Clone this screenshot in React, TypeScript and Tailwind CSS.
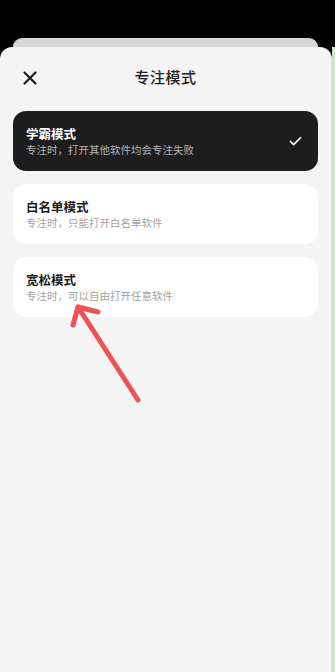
import { X, Check } from "lucide-react";

const modes = [
  { title: "学霸模式", desc: "专注时，打开其他软件均会专注失败", active: true },
  { title: "白名单模式", desc: "专注时，只能打开白名单软件", active: false },
  { title: "宽松模式", desc: "专注时，可以自由打开任意软件", active: false },
];

export default function App() {
  return (
    <div
      className="relative w-[335px] h-[672px] bg-black flex flex-col overflow-hidden"
      style={{ fontFamily: '"Noto Sans CJK SC", "Noto Sans", sans-serif' }}
    >
      <div className="h-[38px] shrink-0" />
      <div className="h-[9px] shrink-0 ml-[13px] mr-[17px] bg-[#d7d7d7] rounded-t-[10px]" />
      <div className="flex flex-1">
        <div className="w-[332px] bg-[#f4f4f4] rounded-t-[12px] border-r border-[#e2e2e2] flex flex-col">
          <div className="h-[60px] shrink-0 relative flex items-center justify-center">
            <X className="absolute left-[19px] top-[20px] w-[22px] h-[22px] text-[#222]" strokeWidth={2.6} />
            <span className="text-[15px] text-[#222] font-medium tracking-[0.5px]">专注模式</span>
          </div>
          <div className="mt-[4px] px-[13px] flex flex-col gap-[13px]">
            {modes.map((m) => (
              <div
                key={m.title}
                className={
                  m.active
                    ? "h-[60px] rounded-[13px] bg-[#1d1d1d] flex items-center pl-[13px] pr-[15px]"
                    : "h-[60px] rounded-[13px] bg-white flex items-center pl-[13px] pr-[15px]"
                }
              >
                <div className="flex-1 flex flex-col">
                  <span
                    className={
                      m.active
                        ? "text-[12.5px] leading-[16px] font-bold text-white"
                        : "text-[12.5px] leading-[16px] font-bold text-[#1a1a1a]"
                    }
                  >
                    {m.title}
                  </span>
                  <span
                    className={
                      m.active
                        ? "mt-[1px] text-[10.5px] leading-[14px] text-[#b5b5b5]"
                        : "mt-[1px] text-[10.5px] leading-[14px] text-[#a3a3a3]"
                    }
                  >
                    {m.desc}
                  </span>
                </div>
                {m.active && <Check className="w-[15px] h-[15px] text-white" strokeWidth={2.8} />}
              </div>
            ))}
          </div>
        </div>
        <div className="w-[3px] bg-[#c6e8cb]" />
      </div>
      <svg className="absolute left-0 top-0 pointer-events-none" width="335" height="672">
        <g stroke="#ef5353" strokeWidth="5" strokeLinecap="round" strokeLinejoin="round" fill="none">
          <line x1="138" y1="400" x2="78" y2="307" />
          <polyline points="98,312 78,307 73,325" />
        </g>
      </svg>
    </div>
  );
}
